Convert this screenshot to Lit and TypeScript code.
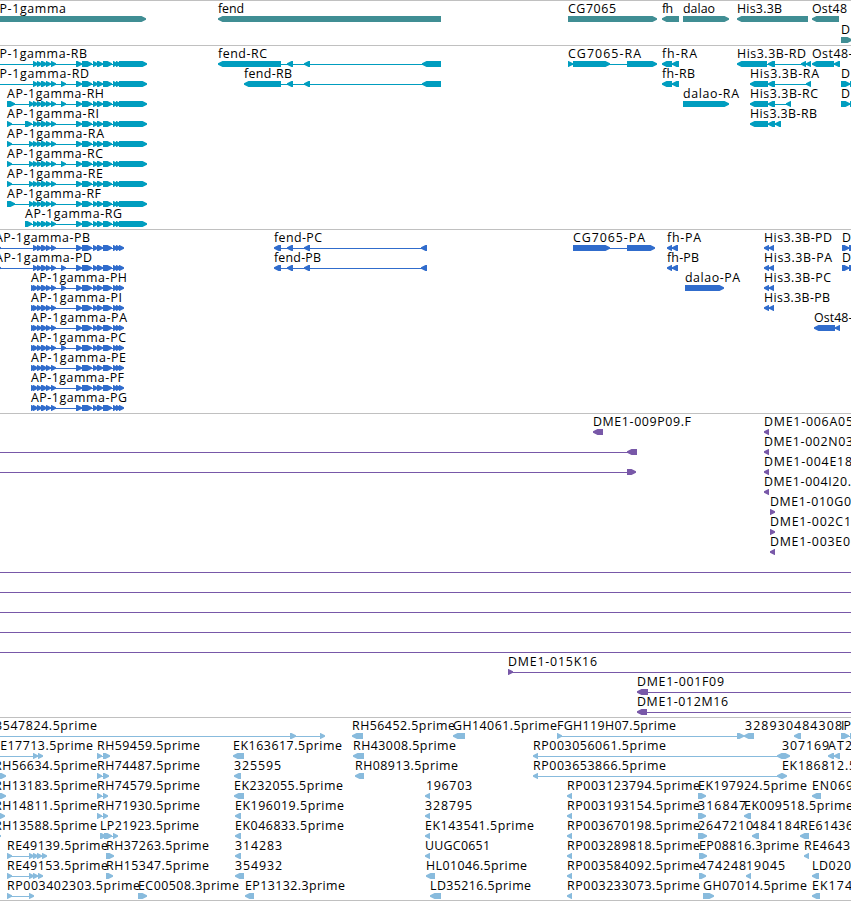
import { html, svg, LitElement, css } from 'lit';
import { customElement, property } from 'lit/decorators.js';

// label, label start, label end, glyphs
// glyphs: ">a-b" points right, "<a-b" points left, "~a-b" is a plain line
type Feature = [string, number, number, string]

interface Track {
  name: string
  color: string
  rowHeight: number
  rows: Feature[][]
}

const HEAD = '>33-38 >37-42 >41-47 >46-51 >51-56'
const HEAD_C = `${HEAD} >61-66`
const MID = '>76-82 >82-92 >93-98 >97-103 >103-112 >113-118 >116-121'
const UTR = `${MID} >119-147`
const CDS = `${MID} >119-124`

const est = (name: string): Feature => [name, 567, 700, '<567-572']

const tracks: Track[] = [
  {
    name: 'gene', color: '#408e94', rowHeight: 21,
    rows: [
      [
        ['AP-1gamma', -9, 66, '>-20-146'],
        ['fend', 218, 244, '<218-441'],
        ['CG7065', 568, 616, '>568-657'],
        ['fh', 662, 673, '<662-679'],
        ['dalao', 683, 715, '>683-729'],
        ['His3.3B', 737, 782, '<737-808'],
        ['Ost48', 812, 847, '<812-839'],
      ],
      [['D', 841, 850, '>841-852']],
    ],
  },
  {
    name: 'transcript', color: '#009dbf', rowHeight: 20,
    rows: [
      [
        ['AP-1gamma-RB', -9, 87, `~-9-33 ${HEAD} ${UTR}`],
        ['fend-RC', 218, 267, '<218-281 <287-293 <304-310 <422-441'],
        ['CG7065-RA', 568, 641, '>568-573 >573-610 >627-657'],
        ['fh-RA', 662, 697, '<662-672 <672-679'],
        ['His3.3B-RD', 737, 806, '<737-767 <768-775 <801-806 <806-811'],
        ['Ost48-RA', 812, 869, '<812-834 <834-840'],
      ],
      [
        ['AP-1gamma-RD', -9, 89, `~-9-33 ${HEAD_C} ${UTR}`],
        ['fend-RB', 244, 292, '<244-281 <287-293 <304-310 <422-441'],
        ['fh-RB', 662, 695, '<662-672 <672-679'],
        ['His3.3B-RA', 750, 819, '<750-768 <768-775 <806-811'],
        ['D', 841, 850, '>841-850 >850-855'],
      ],
      [
        ['AP-1gamma-RH', 7, 104, `>7-15 >29-34 ${HEAD_C} ${UTR}`],
        ['dalao-RA', 683, 739, '>683-729'],
        ['His3.3B-RC', 750, 818, '<750-768 <768-775 <786-791'],
        ['D', 841, 850, '>841-850 >850-855'],
      ],
      [
        ['AP-1gamma-RI', 7, 99, `>7-12 >25-32 ${HEAD} ${UTR}`],
        ['His3.3B-RB', 750, 817, '<750-768 <768-775 <775-781'],
      ],
      [['AP-1gamma-RA', 7, 104, `>7-12 >29-34 ${HEAD} ${UTR}`]],
      [['AP-1gamma-RC', 7, 103, `>7-12 >29-34 ${HEAD_C} ${UTR}`]],
      [['AP-1gamma-RE', 7, 103, `>7-12 >29-34 ${HEAD} ${UTR}`]],
      [['AP-1gamma-RF', 7, 101, `>7-15 >29-34 ${HEAD} ${UTR}`]],
      [['AP-1gamma-RG', 25, 122, `>25-32 ${HEAD} ${UTR}`]],
    ],
  },
  {
    name: 'protein', color: '#306ccc', rowHeight: 20,
    rows: [
      [
        ['AP-1gamma-PB', -5, 90, `>-5-1 ${HEAD} ${CDS}`],
        ['fend-PC', 274, 322, '<274-281 <287-293 <304-310 <421-427'],
        ['CG7065-PA', 573, 645, '>573-610 >627-655'],
        ['fh-PA', 667, 701, '<667-672 <672-678'],
        ['His3.3B-PD', 764, 832, '<764-769 <769-774'],
        ['D', 842, 851, '>842-849 >849-855'],
      ],
      [
        ['AP-1gamma-PD', -5, 92, `>-5-1 ${HEAD_C} ${CDS}`],
        ['fend-PB', 274, 321, '<274-281 <287-293 <304-310 <421-427'],
        ['fh-PB', 667, 699, '<667-672 <672-678'],
        ['His3.3B-PA', 764, 832, '<764-769 <769-774'],
        ['D', 842, 851, '>842-849 >849-855'],
      ],
      [
        ['AP-1gamma-PH', 31, 127, `>31-36 ${HEAD_C} ${CDS}`],
        ['dalao-PA', 685, 740, '>685-724'],
        ['His3.3B-PC', 764, 831, '<764-769 <769-774'],
      ],
      [
        ['AP-1gamma-PI', 31, 122, `>31-36 ${HEAD} ${CDS}`],
        ['His3.3B-PB', 764, 830, '<764-769 <769-774'],
      ],
      [
        ['AP-1gamma-PA', 31, 127, `>31-36 ${HEAD} ${CDS}`],
        ['Ost48-PA', 814, 868, '<814-835 <835-840'],
      ],
      [['AP-1gamma-PC', 31, 126, `>31-36 ${HEAD_C} ${CDS}`]],
      [['AP-1gamma-PE', 31, 126, `>31-36 ${HEAD} ${CDS}`]],
      [['AP-1gamma-PF', 31, 124, `>31-36 ${HEAD} ${CDS}`]],
      [['AP-1gamma-PG', 31, 127, `>31-36 ${HEAD} ${CDS}`]],
    ],
  },
  {
    name: 'clone', color: '#7858a8', rowHeight: 20,
    rows: [
      [['DME1-009P09.F', 593, 691, '<593-603'], ['DME1-006A05', 764, 853, '<764-769']],
      [['', 0, 0, '~0-627 <627-637'], ['DME1-002N03', 764, 853, '<764-769']],
      [['', 0, 0, '~0-627 >627-636'], ['DME1-004E18', 764, 852, '<764-769']],
      [['DME1-004I20.', 764, 851, '<764-769']],
      [['DME1-010G0', 770, 851, '>770-775']],
      [['DME1-002C1', 770, 851, '>770-775']],
      [['DME1-003E0', 770, 850, '<770-775']],
      [['', 0, 0, '~0-851']],
      [['', 0, 0, '~0-851']],
      [['', 0, 0, '~0-851']],
      [['', 0, 0, '~0-851']],
      [['', 0, 0, '~0-851']],
      [['DME1-015K16', 508, 597, '>508-513 ~513-851']],
      [['DME1-001F09', 637, 724, '<637-648 ~648-851']],
      [['DME1-012M16', 637, 728, '<637-647 ~647-851']],
    ],
  },
  {
    name: 'est', color: '#88bbdd', rowHeight: 20,
    rows: [
      [
        ['3547824.5prime', -5, 97, '~-5-290 >290-296 >320-325'],
        ['RH56452.5prime', 352, 455, '<352-363'],
        ['GH14061.5prime', 453, 557, '<453-465'],
        ['FGH119H07.5prime', 557, 676, '>557-562 >737-744'],
        ['328930', 745, 793, '<744-754'],
        ['484308', 794, 842, '<794-801'],
        ['IP', 841, 851, '>841-849 >850-855'],
      ],
      [
        ['RE17713.5prime', -8, 93, '~-8-33 >33-38 >38-43'],
        ['RH59459.5prime', 97, 200, '>97-102 >103-110'],
        ['EK163617.5prime', 233, 342, '<233-244'],
        ['RH43008.5prime', 353, 456, '<353-364'],
        ['RP003056061.5prime', 533, 666, '<533-538 <777-784 >783-790'],
        ['307169', 782, 829, ''],
        ['AT2', 828, 852, '<828-834 <834-840'],
      ],
      [
        ['RH56634.5prime', -6, 97, '>-5-6'],
        ['RH74487.5prime', 97, 200, '>97-102 >103-109'],
        ['325595', 234, 281, '<234-241'],
        ['RH08913.5prime', 355, 458, '<355-364'],
        ['RP003653866.5prime', 533, 666, '<533-538 <777-782 >782-787'],
        ['EK186812.5', 782, 856, ''],
      ],
      [
        ['RH13183.5prime', -6, 97, '>-5-6'],
        ['RH74579.5prime', 97, 200, '>97-102 >103-108'],
        ['EK232055.5prime', 234, 343, '<234-244'],
        ['196703', 426, 472, '<425-430'],
        est('RP003123794.5prime'),
        ['EK197924.5prime', 698, 807, '>698-706'],
        ['EN069', 812, 853, '<812-821'],
      ],
      [
        ['RH14811.5prime', -6, 97, '>-5-5'],
        ['RH71930.5prime', 97, 200, '>97-102 >103-108'],
        ['EK196019.5prime', 235, 344, '<235-241'],
        ['328795', 425, 472, '<425-430'],
        est('RP003193154.5prime'),
        ['316847', 698, 746, '>698-706'],
        ['EK009518.5prime', 744, 853, '<744-751'],
      ],
      [
        ['RH13588.5prime', -6, 97, '>-4-1'],
        ['LP21923.5prime', 100, 199, '>100-106 >104-112 >113-118'],
        ['EK046833.5prime', 235, 344, '<235-241'],
        ['EK143541.5prime', 425, 534, '<425-430'],
        est('RP003670198.5prime'),
        ['2647210', 698, 753, '>698-707'],
        ['484184', 752, 800, '<752-759'],
        ['RE61436', 800, 853, '<800-809'],
      ],
      [
        ['RE49139.5prime', 7, 108, '>7-12 >29-34 >33-38 >37-42 >42-47'],
        ['RH37263.5prime', 106, 209, '>106-114'],
        ['314283', 235, 282, '<235-241'],
        ['UUGC0651', 425, 490, '<425-430'],
        est('RP003289818.5prime'),
        ['EP08816.3prime', 699, 799, '>699-707'],
        ['RE4643', 804, 850, '<804-809'],
      ],
      [
        ['RE49153.5prime', 7, 108, '>7-12 >29-34 >33-38 >38-43'],
        ['RH15347.5prime', 106, 209, '>106-113'],
        ['354932', 235, 282, '<235-244'],
        ['HL01046.5prime', 426, 527, '<426-435'],
        est('RP003584092.5prime'),
        ['474248', 699, 746, '>699-706'],
        ['19045', 746, 785, '<746-751'],
        ['LD020', 812, 851, '<812-819'],
      ],
      [
        ['RP003402303.5prime', 7, 140, '>7-12 >29-34'],
        ['EC00508.3prime', 138, 239, '>138-147'],
        ['EP13132.3prime', 245, 345, '<245-254'],
        ['LD35216.5prime', 430, 531, '<430-441'],
        est('RP003233073.5prime'),
        ['GH07014.5prime', 703, 807, '>703-714'],
        ['EK174', 812, 852, '<812-820'],
      ],
    ],
  },
]

const parse = (glyphs: string) =>
  [...glyphs.matchAll(/([<>~])(-?\d+)-(\d+)/g)].map(m => ({ kind: m[1], a: +m[2], b: +m[3] }))

function arrow(kind: string, a: number, b: number) {
  const head = Math.min(4.5, b - a - 0.5)
  if (kind === '>') {
    const n = b - head
    return `${a},13 ${n},13 ${b},15.2 ${b},16.8 ${n},19 ${a},19`
  }
  const n = a + head
  return `${b},13 ${n},13 ${a},15.2 ${a},16.8 ${n},19 ${b},19`
}

@customElement('track-row')
export class TrackRow extends LitElement {
  static styles = [
    css`
      :host {
        display: block;
      }
      svg {
        display: block;
        overflow: visible;
      }
      text {
        font: 12.4px 'Open Sans', 'Noto Sans', sans-serif;
        fill: #000;
      }
    `
  ];

  @property({attribute: false})
  features: Feature[] = []

  @property({type: String})
  color: string = '#000'

  @property({type: Number})
  height: number = 20

  render() {
    return html`
      <svg width="851" height=${this.height}>
        ${this.features.map(([label, x, end, glyphs]) => {
          const parts = parse(glyphs)
          const from = Math.min(...parts.map(p => p.a))
          const to = Math.max(...parts.map(p => p.b))
          return svg`
            ${parts.length > 1 ? svg`<rect x=${from + 1} y="16" width=${to - from - 2} height="1" fill=${this.color} />` : ''}
            ${parts.map(p => p.kind === '~'
              ? svg`<rect x=${p.a} y="16" width=${p.b - p.a} height="1" fill=${this.color} />`
              : svg`<polygon points=${arrow(p.kind, p.a, p.b)} fill=${this.color} />`)}
            ${label ? svg`<text x=${x} y="10" textLength=${end - x}>${label}</text>` : ''}
          `
        })}
      </svg>
    `;
  }
}

@customElement('app-root')
export default class AppRoot extends LitElement {
  static styles = [
    css`
      :host {
        display: block;
        width: 851px;
        height: 901px;
        overflow: hidden;
        background-color: #fff;
      }
      .track {
        border-top: 1px solid #c0c0c0;
        padding: 2px 0 1px;
      }
      .track.gene {
        padding-bottom: 0;
      }
      .track.est {
        padding-bottom: 0;
        border-bottom: 1px solid #c0c0c0;
      }
    `
  ];

  render() {
    return html`
      ${tracks.map(t => html`
        <div class="track ${t.name}">
          ${t.rows.map(row => html`
            <track-row .features=${row} color=${t.color} height=${t.rowHeight}></track-row>
          `)}
        </div>
      `)}
    `;
  }
}
